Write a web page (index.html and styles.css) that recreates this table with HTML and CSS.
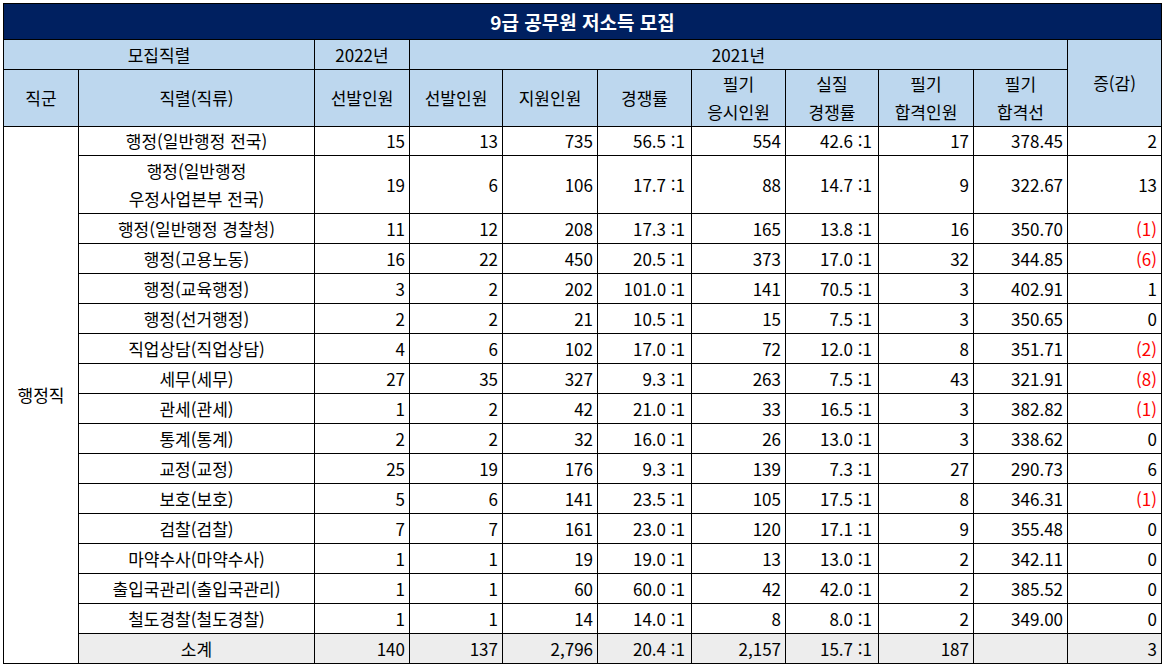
FILE: index.html
```html
<!DOCTYPE html>
<html lang="ko">
<head>
<meta charset="utf-8">
<title>9급 공무원 저소득 모집</title>
<link rel="stylesheet" href="styles.css">
</head>
<body>
<table class="sheet">
  <colgroup>
    <col class="c-group">
    <col class="c-name">
    <col class="c95">
    <col class="c93">
    <col class="c95">
    <col class="c94">
    <col class="c94">
    <col class="c93">
    <col class="c95">
    <col class="c94">
    <col class="c94">
  </colgroup>
  <thead>
    <tr class="title-row"><th colspan="11" class="title">9급 공무원 저소득 모집</th></tr>
    <tr class="h1">
      <th colspan="2" class="hd">모집직렬</th>
      <th class="hd">2022년</th>
      <th colspan="7" class="hd">2021년</th>
      <th rowspan="2" class="hd">증(감)</th>
    </tr>
    <tr class="h2">
      <th class="hd">직군</th>
      <th class="hd">직렬(직류)</th>
      <th class="hd">선발인원</th>
      <th class="hd">선발인원</th>
      <th class="hd">지원인원</th>
      <th class="hd">경쟁률</th>
      <th class="hd">필기<br>응시인원</th>
      <th class="hd">실질<br>경쟁률</th>
      <th class="hd">필기<br>합격인원</th>
      <th class="hd">필기<br>합격선</th>
    </tr>
  </thead>
  <tbody>
    <tr class="r29">
      <td rowspan="17" class="grp">행정직</td>
      <td class="nm">행정(일반행정 전국)</td>
      <td class="n">15</td><td class="n">13</td><td class="n">735</td><td class="q">56.5 :1</td><td class="n">554</td><td class="q">42.6 :1</td><td class="n">17</td><td class="s">378.45</td><td class="n">2</td>
    </tr>
    <tr class="r58">
      <td class="nm">행정(일반행정<br>우정사업본부 전국)</td>
      <td class="n">19</td><td class="n">6</td><td class="n">106</td><td class="q">17.7 :1</td><td class="n">88</td><td class="q">14.7 :1</td><td class="n">9</td><td class="s">322.67</td><td class="n">13</td>
    </tr>
    <tr class="r30">
      <td class="nm">행정(일반행정 경찰청)</td>
      <td class="n">11</td><td class="n">12</td><td class="n">208</td><td class="q">17.3 :1</td><td class="n">165</td><td class="q">13.8 :1</td><td class="n">16</td><td class="s">350.70</td><td class="n neg">(1)</td>
    </tr>
    <tr class="r30">
      <td class="nm">행정(고용노동)</td>
      <td class="n">16</td><td class="n">22</td><td class="n">450</td><td class="q">20.5 :1</td><td class="n">373</td><td class="q">17.0 :1</td><td class="n">32</td><td class="s">344.85</td><td class="n neg">(6)</td>
    </tr>
    <tr class="r30">
      <td class="nm">행정(교육행정)</td>
      <td class="n">3</td><td class="n">2</td><td class="n">202</td><td class="q">101.0 :1</td><td class="n">141</td><td class="q">70.5 :1</td><td class="n">3</td><td class="s">402.91</td><td class="n">1</td>
    </tr>
    <tr class="r30">
      <td class="nm">행정(선거행정)</td>
      <td class="n">2</td><td class="n">2</td><td class="n">21</td><td class="q">10.5 :1</td><td class="n">15</td><td class="q">7.5 :1</td><td class="n">3</td><td class="s">350.65</td><td class="n">0</td>
    </tr>
    <tr class="r30">
      <td class="nm">직업상담(직업상담)</td>
      <td class="n">4</td><td class="n">6</td><td class="n">102</td><td class="q">17.0 :1</td><td class="n">72</td><td class="q">12.0 :1</td><td class="n">8</td><td class="s">351.71</td><td class="n neg">(2)</td>
    </tr>
    <tr class="r30">
      <td class="nm">세무(세무)</td>
      <td class="n">27</td><td class="n">35</td><td class="n">327</td><td class="q">9.3 :1</td><td class="n">263</td><td class="q">7.5 :1</td><td class="n">43</td><td class="s">321.91</td><td class="n neg">(8)</td>
    </tr>
    <tr class="r30">
      <td class="nm">관세(관세)</td>
      <td class="n">1</td><td class="n">2</td><td class="n">42</td><td class="q">21.0 :1</td><td class="n">33</td><td class="q">16.5 :1</td><td class="n">3</td><td class="s">382.82</td><td class="n neg">(1)</td>
    </tr>
    <tr class="r30">
      <td class="nm">통계(통계)</td>
      <td class="n">2</td><td class="n">2</td><td class="n">32</td><td class="q">16.0 :1</td><td class="n">26</td><td class="q">13.0 :1</td><td class="n">3</td><td class="s">338.62</td><td class="n">0</td>
    </tr>
    <tr class="r30">
      <td class="nm">교정(교정)</td>
      <td class="n">25</td><td class="n">19</td><td class="n">176</td><td class="q">9.3 :1</td><td class="n">139</td><td class="q">7.3 :1</td><td class="n">27</td><td class="s">290.73</td><td class="n">6</td>
    </tr>
    <tr class="r30">
      <td class="nm">보호(보호)</td>
      <td class="n">5</td><td class="n">6</td><td class="n">141</td><td class="q">23.5 :1</td><td class="n">105</td><td class="q">17.5 :1</td><td class="n">8</td><td class="s">346.31</td><td class="n neg">(1)</td>
    </tr>
    <tr class="r30">
      <td class="nm">검찰(검찰)</td>
      <td class="n">7</td><td class="n">7</td><td class="n">161</td><td class="q">23.0 :1</td><td class="n">120</td><td class="q">17.1 :1</td><td class="n">9</td><td class="s">355.48</td><td class="n">0</td>
    </tr>
    <tr class="r30">
      <td class="nm">마약수사(마약수사)</td>
      <td class="n">1</td><td class="n">1</td><td class="n">19</td><td class="q">19.0 :1</td><td class="n">13</td><td class="q">13.0 :1</td><td class="n">2</td><td class="s">342.11</td><td class="n">0</td>
    </tr>
    <tr class="r30">
      <td class="nm">출입국관리(출입국관리)</td>
      <td class="n">1</td><td class="n">1</td><td class="n">60</td><td class="q">60.0 :1</td><td class="n">42</td><td class="q">42.0 :1</td><td class="n">2</td><td class="s">385.52</td><td class="n">0</td>
    </tr>
    <tr class="r30">
      <td class="nm">철도경찰(철도경찰)</td>
      <td class="n">1</td><td class="n">1</td><td class="n">14</td><td class="q">14.0 :1</td><td class="n">8</td><td class="q">8.0 :1</td><td class="n">2</td><td class="s">349.00</td><td class="n">0</td>
    </tr>
    <tr class="r30 total">
      <td class="nm">소계</td>
      <td class="n">140</td><td class="n">137</td><td class="n">2,796</td><td class="q">20.4 :1</td><td class="n">2,157</td><td class="q">15.7 :1</td><td class="n">187</td><td class="s"></td><td class="n">3</td>
    </tr>
  </tbody>
</table>
</body>
</html>
```

FILE: styles.css
```css
html, body {
  margin: 0;
  padding: 0;
  background: #ffffff;
}

body {
  padding: 3px 0 0 3px;
  font-family: "Noto Sans CJK KR", "Noto Sans", sans-serif;
  font-size: 17px;
  color: #000000;
}

.sheet {
  border-collapse: collapse;
  table-layout: fixed;
  width: 1159px;
}

.c-group { width: 75px; }
.c-name { width: 236px; }
.c95 { width: 95px; }
.c93 { width: 93px; }
.c94 { width: 94px; }

.sheet th,
.sheet td {
  border: 1px solid #000000;
  padding: 0;
  line-height: 28px;
  white-space: nowrap;
  overflow: hidden;
}

.title-row { height: 36px; }
.h1 { height: 30px; }
.h2 { height: 57px; }
.r29 { height: 29px; }
.r30 { height: 30px; }
.r58 { height: 58px; }

.sheet .title {
  background: #002060;
  color: #ffffff;
  font-weight: bold;
  font-size: 19px;
  text-align: center;
}

.sheet .hd {
  background: #bdd7ee;
  font-weight: normal;
  text-align: center;
  vertical-align: middle;
}

.sheet .grp {
  text-align: center;
  vertical-align: middle;
  background: #ffffff;
}

.sheet .nm {
  text-align: center;
}

.sheet .n,
.sheet .s {
  text-align: right;
  padding-right: 4px;
}

.sheet .q {
  text-align: right;
  padding-right: 6px;
}

.sheet .neg {
  color: #ff0000;
}

.sheet .total td {
  background: #ededed;
}
```
